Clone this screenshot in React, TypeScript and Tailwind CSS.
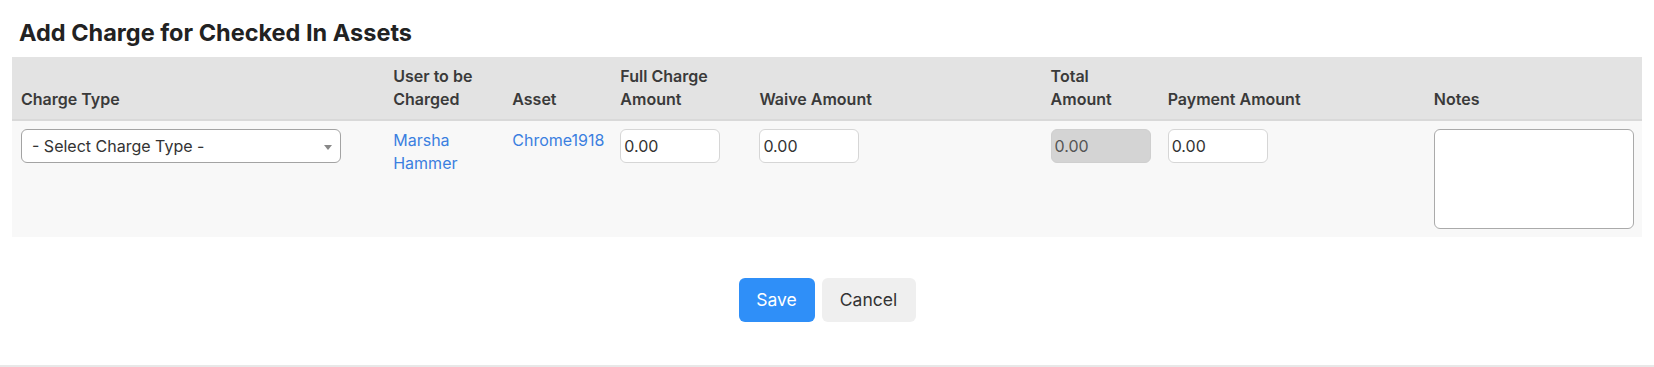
import { useState } from "react";

// Add Charge for Checked In Assets
const App = () => {
  const [fullCharge, setFullCharge] = useState("0.00");
  const [waive, setWaive] = useState("0.00");
  const [payment, setPayment] = useState("0.00");
  const [notes, setNotes] = useState("");

  const thClass =
    "px-2 py-2 text-left align-bottom font-semibold text-[16px] leading-[23px] text-[#3a3a3a]";
  const tdClass = "px-2 py-2 align-top text-[16px] leading-[23px]";
  const inputClass =
    "w-[100px] h-[34px] rounded-md border border-[#d6d6d6] bg-white pl-[3px] text-[16px] text-[#333] outline-none";

  return (
    <div
      className="min-h-[367px] w-full bg-white flex flex-col"
      style={{ fontFamily: "Inter, 'Liberation Sans', sans-serif" }}
    >
      <div className="px-3 flex-1">
        <h2 className="mt-[19px] mb-[10px] pl-[7px] text-[23.5px] leading-[28px] font-bold text-[#222]">
          Add Charge for Checked In Assets
        </h2>

        <table className="w-full table-fixed border-collapse">
          <thead>
            <tr className="bg-[#e3e3e3] border-b-2 border-[#d9d9d9]">
              <th className={`${thClass} w-[373px] pl-[9px]`}>Charge Type</th>
              <th className={`${thClass} w-[119px]`}>User to be Charged</th>
              <th className={`${thClass} w-[108px]`}>Asset</th>
              <th className={`${thClass} w-[139px]`}>Full Charge Amount</th>
              <th className={`${thClass} w-[291px]`}>Waive Amount</th>
              <th className={`${thClass} w-[117px]`}>Total Amount</th>
              <th className={`${thClass} w-[266px]`}>Payment Amount</th>
              <th className={`${thClass} w-[216px]`}>Notes</th>
            </tr>
          </thead>
          <tbody>
            <tr className="bg-[#f8f8f8] h-[115px]">
              <td className={`${tdClass} pl-[9px]`}>
                <div className="relative w-[320px] h-[34px] rounded-md border border-[#a3a3a3] bg-white flex items-center pl-[10px] text-[16px] text-[#333]">
                  - Select Charge Type -
                  <span className="absolute right-[8px] top-[15px] w-0 h-0 border-l-[4px] border-r-[4px] border-t-[5px] border-l-transparent border-r-transparent border-t-[#888]" />
                </div>
              </td>
              <td className={tdClass}>
                <a href="#" className="text-[#3b7fe0]">
                  Marsha Hammer
                </a>
              </td>
              <td className={tdClass}>
                <a href="#" className="text-[#3b7fe0]">
                  Chrome1918
                </a>
              </td>
              <td className={tdClass}>
                <input
                  className={inputClass}
                  value={fullCharge}
                  onChange={(e) => setFullCharge(e.target.value)}
                />
              </td>
              <td className={tdClass}>
                <input
                  className={inputClass}
                  value={waive}
                  onChange={(e) => setWaive(e.target.value)}
                />
              </td>
              <td className={tdClass}>
                <input
                  className="w-[100px] h-[34px] rounded-md border border-[#cfcfcf] bg-[#d4d4d4] pl-[3px] text-[16px] text-[#555] outline-none"
                  value="0.00"
                  disabled
                  readOnly
                />
              </td>
              <td className={tdClass}>
                <input
                  className={inputClass}
                  value={payment}
                  onChange={(e) => setPayment(e.target.value)}
                />
              </td>
              <td className={tdClass}>
                <textarea
                  className="block w-[200px] h-[100px] rounded-md border border-[#aaa] bg-white resize-none outline-none p-1"
                  value={notes}
                  onChange={(e) => setNotes(e.target.value)}
                />
              </td>
            </tr>
          </tbody>
        </table>

        <div className="mt-[41px] flex justify-center gap-[7px]">
          <button
            type="button"
            className="w-[76px] h-[44px] rounded-md bg-[#2f8ff8] text-white text-[17.5px]"
          >
            Save
          </button>
          <button
            type="button"
            className="w-[94px] h-[44px] rounded-md bg-[#efefef] text-[#333] text-[17.5px]"
          >
            Cancel
          </button>
        </div>
      </div>
      <div className="h-[2px] bg-[#e8e8e8]" />
    </div>
  );
};

export default App;
